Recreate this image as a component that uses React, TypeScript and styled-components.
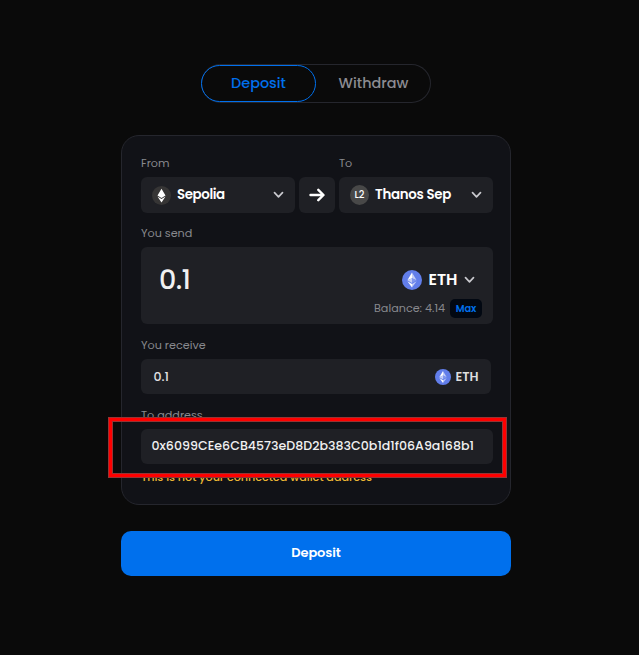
import React from "react";
import styled, { createGlobalStyle } from "styled-components";

const Global = createGlobalStyle`
  * { box-sizing: border-box; }
  body { margin: 0; background: #0a0a0a; font-family: Poppins, Inter, "Noto Sans", sans-serif; }
  button { font-family: inherit; padding: 0; margin: 0; border: 0; background: none; }
`;

const Page = styled.main`
  width: 639px; height: 655px; padding: 64px 0 0 121px; overflow: hidden;
  background: #0a0a0a; display: flex; flex-direction: column; align-items: flex-start;
`;
const Tabs = styled.div`
  display: flex; align-items: center; width: 230px; height: 39px; margin-left: 80px;
  border-radius: 20px; box-shadow: inset 0 0 0 1px #25262d;
`;
const Tab = styled.button<{ $active?: boolean }>`
  width: 115px; height: 37px; border-radius: 19px; font-size: 14.4px; font-weight: 500;
  color: ${p => (p.$active ? "#0070ed" : "#8c8c92")};
  border: 1px solid ${p => (p.$active ? "#0070ed" : "transparent")};
`;
const Card = styled.section`
  position: relative; width: 390px; height: 370px; margin-top: 32px; padding: 17px 0 0 19px;
  border: 1px solid #25262d; border-radius: 18px; background: #111217;
`;
const Label = styled.div<{ $gap?: number }>`
  height: 20px; line-height: 21px; margin-top: ${p => p.$gap ?? 0}px; margin-bottom: 4px;
  font-size: 11.2px; color: #88898e;
`;
const Networks = styled.div`display: grid; grid-template-columns: 154px 36px 154px; column-gap: 4px;`;
const Select = styled.button`
  height: 36px; padding: 0 11px; display: flex; align-items: center;
  border-radius: 6px; background: #1f2025; color: #fff;
`;
const SelectName = styled.span<{ $ls: number }>`
  flex: 1; margin-left: 6px; text-align: left; font-size: 13.4px; font-weight: 600;
  letter-spacing: ${p => p.$ls}px; white-space: nowrap;
`;
const ArrowBox = styled.div`
  height: 36px; display: grid; place-items: center; border-radius: 6px; background: #1f2025;
`;
const LayerBadge = styled.span`
  width: 19px; height: 20px; border-radius: 50%; background: #484848; color: #fff;
  font-size: 9.8px; font-weight: 500; line-height: 20px; text-align: center;
`;
const AmountBox = styled.div`
  width: 352px; height: 77px; border-radius: 6px; background: #1f2025;
  padding: 16px 11px 6px 18px; display: flex; justify-content: space-between;
`;
const Amount = styled.div`font-size: 27px; line-height: 33px; font-weight: 500; color: #f0f0f1; letter-spacing: -0.6px;`;
const AmountSide = styled.div`display: flex; flex-direction: column; justify-content: space-between; align-items: flex-end;`;
const Token = styled.div<{ $large?: boolean }>`
  display: flex; align-items: center; gap: ${p => (p.$large ? 6.5 : 5)}px;
  font-size: ${p => (p.$large ? 15.9 : 12.6)}px; line-height: 22px; font-weight: 600;
  color: ${p => (p.$large ? "#fff" : "#dededf")};
  height: ${p => (p.$large ? 33 : 24)}px; margin-right: ${p => (p.$large ? 7 : 0)}px;
`;
const Balance = styled.div`display: flex; align-items: center; font-size: 11.2px; color: #88898e; white-space: nowrap;`;
const Max = styled.button`
  width: 32px; height: 19px; margin-left: 5px; border-radius: 5px; background: #020812;
  color: #0070ed; font-size: 9.8px; font-weight: 600;
`;
const Field = styled.div<{ $wide?: boolean }>`
  width: ${p => (p.$wide ? 352 : 350)}px; height: 35px; border-radius: 6px; background: #1f2025;
  padding: 0 12.5px ${p => (p.$wide ? 2 : 0)}px ${p => (p.$wide ? 10.5 : 12.5)}px;
  display: flex; align-items: center; justify-content: space-between;
  color: ${p => (p.$wide ? "#f0f0f1" : "#e2e2e3")}; font-size: 12.6px; font-weight: 500; white-space: nowrap;
`;
const Warning = styled.div`
  margin-top: 4px; font-size: 11.2px; line-height: 18px; font-weight: 500; letter-spacing: -0.05px;
  color: #eab434; white-space: nowrap;
`;
const Highlight = styled.div`
  position: absolute; left: -14px; top: 281px; width: 399px; height: 61px;
  border: 1px solid #953434;
  box-shadow: inset 0 0 0 3px #ff0000, inset 0 0 0 4px #953434;
`;
const Submit = styled.button`
  width: 390px; height: 45px; margin-top: 26px; border-radius: 10px; background: #0070ed;
  color: #fff; font-size: 13px; font-weight: 600; letter-spacing: -0.1px; padding-bottom: 2px;
`;

const Chevron = () => (
  <svg width="11" height="8" viewBox="0 0 11 8" fill="none" stroke="#c9c9ce" strokeWidth="1.7" strokeLinecap="round" strokeLinejoin="round"><path d="M1.5 1.7 5.5 5.8 9.5 1.7" /></svg>
);
const Sepolia = () => (
  <svg width="19" height="19" viewBox="0 0 19 19"><circle cx="9.5" cy="9.5" r="9.5" fill="#363535" /><path d="M9.5 2.8 13.5 9.6 9.5 12.1 5.5 9.6Z M5.5 10.5 9.5 13 13.5 10.5 9.5 16.5Z" fill="#fff" /></svg>
);
const Eth = ({ size }: { size: number }) => (
  <svg width={size} height={size} viewBox="0 0 20 20">
    <circle cx="10" cy="10" r="10" fill="#627eea" />
    <path d="M10 2.4 5.4 10.2 10 8.2Z" fill="#fff" /><path d="M10 2.4V8.2L14.6 10.2Z" fill="#c4cef6" />
    <path d="M5.4 10.2 10 8.2V12.9Z" fill="#c4cef6" /><path d="M10 8.2V12.9L14.6 10.2Z" fill="#8197ee" />
    <path d="M5.4 11.3 10 14V17.6Z" fill="#fff" /><path d="M10 14V17.6L14.6 11.3Z" fill="#c4cef6" />
  </svg>
);
const Arrow = () => (
  <svg width="16" height="14" viewBox="0 0 16 14" fill="none" stroke="#fff" strokeWidth="2.4" strokeLinecap="round" strokeLinejoin="round"><path d="M1.5 7H14M9.3 1.8 14.5 7 9.3 12.2" /></svg>
);

export default function App() {
  return (
    <Page>
      <Global />
      <Tabs><Tab $active>Deposit</Tab><Tab>Withdraw</Tab></Tabs>
      <Card>
        <Networks>
          <Label>From</Label><span /><Label>To</Label>
          <Select><Sepolia /><SelectName $ls={-0.4}>Sepolia</SelectName><Chevron /></Select>
          <ArrowBox><Arrow /></ArrowBox>
          <Select><LayerBadge>L2</LayerBadge><SelectName $ls={-0.3}>Thanos Sep</SelectName><Chevron /></Select>
        </Networks>
        <Label $gap={10}>You send</Label>
        <AmountBox>
          <Amount>0.1</Amount>
          <AmountSide>
            <Token $large><Eth size={20} />ETH<Chevron /></Token>
            <Balance>Balance: 4.14<Max>Max</Max></Balance>
          </AmountSide>
        </AmountBox>
        <Label $gap={11}>You receive</Label>
        <Field><span>0.1</span><Token><Eth size={16} />ETH</Token></Field>
        <Label $gap={11}>To address</Label>
        <Field $wide><span>0x6099CEe6CB4573eD8D2b383C0b1d1f06A9a168b1</span></Field>
        <Warning>This is not your connected wallet address</Warning>
        <Highlight />
      </Card>
      <Submit>Deposit</Submit>
    </Page>
  );
}
